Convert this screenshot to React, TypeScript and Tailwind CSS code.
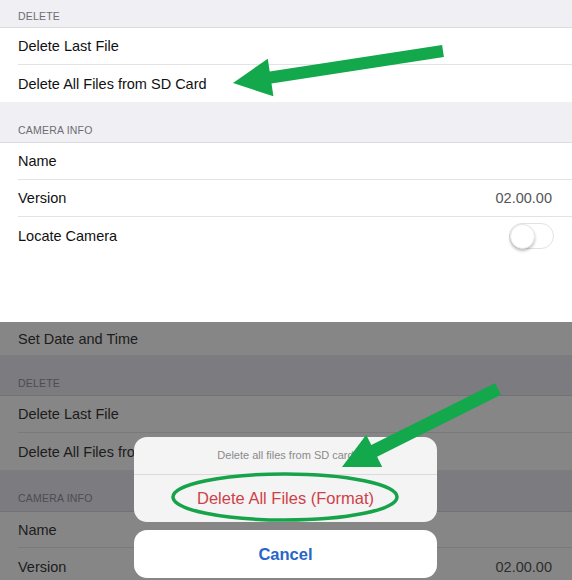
import React from "react";

type RowProps = {
  label: string;
  value?: string;
  h: string;
  line?: boolean;
  dim?: boolean;
  children?: React.ReactNode;
};

const Row = ({ label, value, h, line, dim, children }: RowProps) => (
  <div className={`${h} flex items-center pl-[18px] ${dim ? "bg-[#868686]" : "bg-white"}`}>
    <div
      className={`flex-1 h-full flex items-center pr-[20px] pt-[2px] ${
        line ? (dim ? "border-b border-[#7a7a7a]" : "border-b border-[#e3e3e6]") : ""
      }`}
    >
      <span className={`flex-1 text-[14.5px] ${dim ? "text-[#1c1c1c]" : "text-[#111]"}`}>{label}</span>
      {value && (
        <span className={`text-[14.5px] ${dim ? "text-[#2e2e2e]" : "text-[#555]"}`}>{value}</span>
      )}
      {children}
    </div>
  </div>
);

const Header = ({ label, h, pad, dim }: { label: string; h: string; pad: string; dim?: boolean }) => (
  <div
    className={`${h} ${pad} flex items-end pl-[18px] text-[10.5px] tracking-[0.2px] ${
      dim ? "bg-[#7b7b80] text-[#4d4d52] border-b border-[#727276]" : "bg-[#efeff4] text-[#6d6d72] border-b border-[#dcdce0]"
    }`}
  >
    {label}
  </div>
);

export default function App() {
  return (
    <div className="relative w-[572px] h-[580px] overflow-hidden bg-white font-['Liberation_Sans',Arial,sans-serif]">
      {/* first screenshot */}
      <div className="flex flex-col">
        <Header label="DELETE" h="h-[28px]" pad="pb-[2px]" />
        <Row label="Delete Last File" h="h-[37px]" line />
        <Row label="Delete All Files from SD Card" h="h-[37px]" />
        <Header label="CAMERA INFO" h="h-[41px]" pad="pb-[3px]" />
        <Row label="Name" h="h-[37px]" line />
        <Row label="Version" value="02.00.00" h="h-[37px]" line />
        <Row label="Locate Camera" h="h-[38px]">
          <div className="w-[45px] h-[26px] rounded-full border border-[#e2e2e2] bg-white flex items-center -mr-[2px] -mt-[2px]">
            <div className="w-[25px] h-[25px] rounded-full bg-white border border-[#e6e6e6] shadow-[0_2px_3px_rgba(0,0,0,0.25)]" />
          </div>
        </Row>
      </div>

      <div className="h-[67px] bg-white" />

      {/* second screenshot, dimmed with action sheet */}
      <div className="relative flex flex-col">
        <Row label="Set Date and Time" h="h-[33px]" dim />
        <Header label="DELETE" h="h-[41px]" pad="pb-[3px]" dim />
        <Row label="Delete Last File" h="h-[37px]" line dim />
        <Row label="Delete All Files from SD Card" h="h-[37px]" dim />
        <Header label="CAMERA INFO" h="h-[42px]" pad="pb-[4px]" dim />
        <Row label="Name" h="h-[36px]" line dim />
        <Row label="Version" value="02.00.00" h="h-[37px]" dim />

        <div className="absolute left-[134px] top-[115px] w-[303px] flex flex-col gap-[8px]">
          <div className="rounded-[13px] bg-[#f4f4f4] overflow-hidden">
            <div className="h-[38px] flex items-center justify-center text-[11px] text-[#8a8a8a] border-b border-[#dadada]">
              Delete all files from SD card
            </div>
            <div className="h-[47px] flex items-center justify-center text-[16.5px] text-[#d03f49]">
              Delete All Files (Format)
            </div>
          </div>
          <div className="h-[48px] rounded-[13px] bg-white flex items-center justify-center text-[16.5px] font-bold text-[#2766c6]">
            Cancel
          </div>
        </div>
      </div>

      {/* annotations */}
      <svg className="absolute inset-0 pointer-events-none" width="572" height="580" viewBox="0 0 572 580">
        <polygon
          fill="#12a84b"
          points="442.1,45.1 269.7,71.6 267.8,58.7 233,83 273.4,96.3 271.5,83.4 443.9,56.9"
        />
        <polygon
          fill="#12a84b"
          points="495.1,383.2 371.3,445.1 366.2,434.8 342,467 382.2,467 377.1,456.7 500.9,394.8"
        />
        <ellipse cx="285" cy="497" rx="112" ry="23" fill="none" stroke="#16a34a" strokeWidth="3.5" />
      </svg>
    </div>
  );
}
